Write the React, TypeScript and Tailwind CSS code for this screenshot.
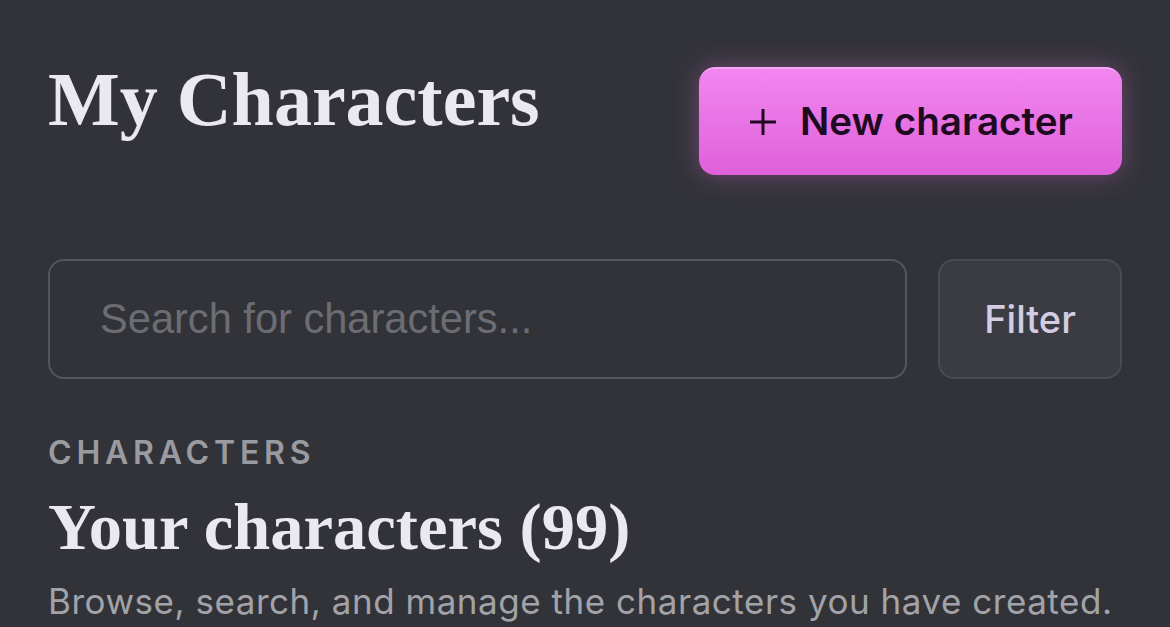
export default function App() {
  return (
    <div className="h-[627px] w-[1170px] overflow-hidden bg-[#323338] px-[48px] font-['Inter',sans-serif]">
      <div className="flex items-start justify-between pt-[54px]">
        <h1 className="font-['Liberation_Serif',serif] text-[76px] font-bold leading-[90px] text-[#ebe9f0]">
          My Characters
        </h1>
        <button className="mt-[13px] flex h-[108px] w-[423px] items-center justify-center gap-[22px] rounded-[16px] border-t-2 border-[#f7a6f5] bg-gradient-to-b from-[#f286ef] to-[#de60da] text-[38.6px] font-semibold text-[#1e0b21] shadow-[0_0_24px_rgba(232,110,228,0.35)]">
          <svg width="30" height="30" viewBox="0 0 30 30" fill="none" stroke="currentColor" strokeWidth="3">
            <path d="M15 2v26M2 15h26" />
          </svg>
          New character
        </button>
      </div>

      <div className="mt-[84px] flex gap-[31px]">
        <div className="flex h-[120px] flex-1 items-center rounded-[16px] border-2 border-[#55565c] px-[50px]">
          <span className="font-['Liberation_Sans',sans-serif] text-[41.6px] text-[#6c6d73]">
            Search for characters...
          </span>
        </div>
        <button className="flex h-[120px] w-[184px] items-center justify-center rounded-[16px] border-2 border-[#4a4b51] bg-[#3b3c42] text-[38px] font-medium text-[#d3cce2]">
          Filter
        </button>
      </div>

      <div className="mt-[56px] text-[32px] font-semibold leading-[36px] tracking-[0.15em] text-[#9a9ba0]">
        CHARACTERS
      </div>
      <h2 className="mt-[18px] font-['Liberation_Serif',serif] text-[66.5px] font-bold leading-[76px] text-[#ebe9f0]">
        Your characters (99)
      </h2>
      <p className="mt-[14px] whitespace-nowrap text-[35px] leading-[44px] tracking-[0.015em] text-[#a2a3a8]">
        Browse, search, and manage the characters you have created.
      </p>
    </div>
  );
}
